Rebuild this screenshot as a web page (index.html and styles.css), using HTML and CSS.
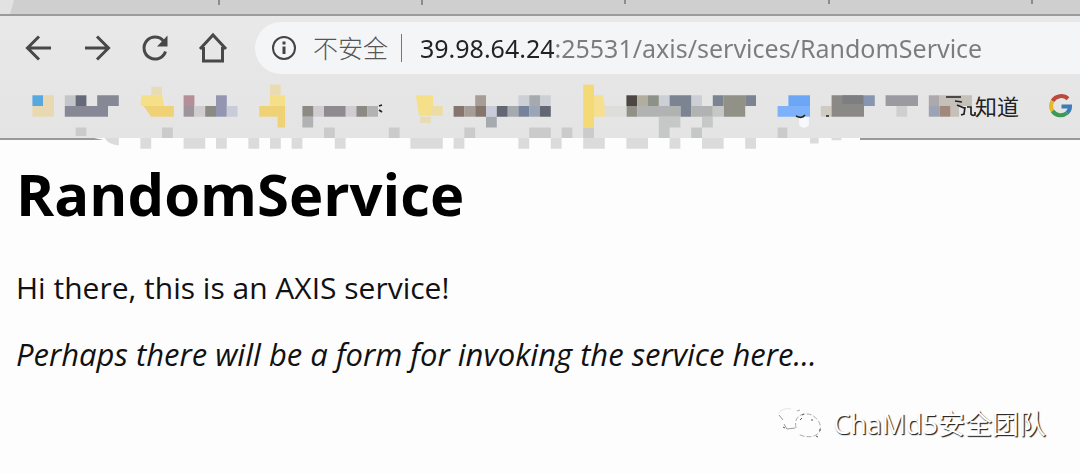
FILE: index.html
```html
<!DOCTYPE html>
<html lang="zh">
<head>
<meta charset="utf-8">
<title>RandomService</title>
<link rel="stylesheet" href="styles.css">
</head>
<body>
<header class="browser">
  <div class="tabs">
    <svg class="tab-marks" viewBox="0 0 1080 14" preserveAspectRatio="xMinYMin slice" aria-hidden="true">
      <path d="M0 0H14Q12 8 10 14H0Z" fill="#e2e2e2"/>
      <path d="M219 0V5M422 0V5M625 0V4M829 0V4M1032 0V4" stroke="#777" stroke-width="1.5"/>
    </svg>
  </div>
  <div class="toolbar">
    <div class="buttons">
      <button class="tool" aria-label="Back"><svg viewBox="0 0 32 32"><path d="M28 16H5M16 4.500L4.500 16L16 27.500"/></svg></button>
      <button class="tool" aria-label="Forward"><svg viewBox="0 0 32 32"><path d="M4 16H27M16 4.500L27.500 16L16 27.500"/></svg></button>
      <button class="tool" aria-label="Reload"><svg viewBox="0 0 32 32"><path d="M26.500 19.500A11 11 0 1 1 24.500 9"/><path class="solid" d="M28.500 3.500V14.500H18Z"/></svg></button>
      <button class="tool" aria-label="Home"><svg viewBox="0 0 32 32"><path d="M3 17L16 3L29 17M6.500 15V29H25.500V15"/></svg></button>
    </div>
    <form class="address">
      <svg class="info" viewBox="0 0 26 26" aria-hidden="true"><circle cx="13" cy="13" r="11"/><path d="M13 11.500V19M13 6.500V9.500" stroke-width="3"/></svg>
      <label class="secure" for="url">不安全</label>
      <input class="url" id="url" type="text" value="39.98.64.24:25531/axis/services/RandomService">
    </form>
  </div>
  <nav class="bookmarks">
    <svg class="mosaic" viewBox="0 74 972 64" aria-hidden="true">
      <path d="M94 138H860V141H108Z" fill="#fdfdfd"/>
      <g transform="translate(0 95.300) scale(10.800 10.700)">
        <path fill="#57a8df" d="M3 0h1v1h-1z"/>
        <path fill="#e9d9b3" d="M4 0h1v2h-2v-1h1z"/>
        <path fill="#c3c6c8" d="M6 0h1v1h-1z"/>
        <path fill="#666a78" d="M7 0h1v1h-1z"/>
        <path fill="#868995" d="M9 0h2v1h-1v1h-4v-1h3z"/>
        <g class="folders">
          <path fill="#eadcb0" d="M14-.8h1v.8h-1zM25-1h1v1h-1zM38.900 2h1v.6h-1z"/>
          <path fill="#f7df80" d="M13.100 0h1.900l.2 1h-2.200zM25 0h1.400v1h-1.400zM38.500 0h1.600v1.900h-1.300z"/>
          <path fill="#f1d06b" d="M13.300 1h2.800v1h-2.100zM24 1h2.400v2h-.7v-1h-1.700z"/>
          <path fill="#eddca0" d="M40 1h1v.9h-1z"/>
        </g>
        <path fill="#b58f97" d="M17 0h1v1h-1z"/>
        <path fill="#a0949c" d="M17 1h1v1h-1z"/>
        <path fill="#cfcdd0" d="M18 1h1v1h-1zM29 1h1v1h-1zM32 1h1v1h-1z"/>
        <path fill="#8c8b83" d="M19 1h1v1h-1zM28 1h1v1h-1zM33 1h1v1h-1z"/>
        <path fill="#9495b0" d="M20 0h1v2h-1z"/>
        <path fill="#c8cbd8" d="M21 1h1v1h-1zM45 1h1v1h-1z"/>
        <path fill="#8e8a91" d="M30 1h2v1h-2z"/>
        <path fill="#b0b2b3" d="M34 1h1v1h-1zM28 2h1v1h-1z"/>
        <path fill="#84756d" d="M42 1h1v1h-1zM44 1h1v1h-1z"/>
        <path fill="#a69d97" d="M43 1h1v1h-1zM44 0h1v1h-1z"/>
        <path fill="#a5aaaf" d="M45 2h1v1h-1zM47 1h1v1h-1zM49 0h1v1h-1z"/>
        <path fill="#626773" d="M46 1h1v1h-1zM50 1h1v1h-1z"/>
        <path fill="#74839b" d="M48 1h1v1h-1z"/>
        <path fill="#9aa5b5" d="M49 1h1v1h-1z"/>
        <path fill="#ccd0d6" d="M48 0h1v1h-1zM50 0h1v1h-1zM61 0h1v1h-1zM64 0h1v1h-1z"/>
        <path fill="#f4da77" d="M54-1h1v4h-1z"/>
        <path fill="#f6df91" d="M55 0h.8l.2 1v1h-1z"/>
        <path fill="#4c4743" d="M58 0h1v1h-1z"/>
        <path fill="#b2ae9f" d="M59 0h1v1h-1z"/>
        <path fill="#8d9289" d="M60 0h1v1h-1z"/>
        <path fill="#7c8492" d="M62 0h2v1h-2zM66 0h1v1h-1zM69 0h1v1h-1zM63 1h1v1h-1z"/>
        <path fill="#929187" d="M67 0h2v2h-2zM58 1h1v1h-1z"/>
        <path fill="#b0b3b1" d="M59 1h4v1h-4zM64 1h2v1h-2z"/>
        <path fill="#c6c7c7" d="M61 2h2v1h-2zM66 1h1v1h-1zM65 2h1v1h-1zM61 3h1v1h-1zM64 3h1v1h-1z"/>
        <path fill="#ddddda" d="M56 1h2v1h-2z"/>
        <path fill="#6ea6f6" d="M73 0h2v1h-2z"/>
        <path fill="#7db1fa" d="M72 1h3v1h-3z"/>
        <path fill="#f6f8fb" d="M74 2h.9v.8q-.5.500-.9 0z"/>
        <path fill="#d0cbc2" d="M76 1h1v1h-1z"/>
        <path fill="#8b8986" d="M77 0h3v2h-3z"/>
        <path fill="#7c7e82" d="M78 0h1.900v.8h-1.900z"/>
        <path fill="#8795b0" d="M80 0h1v1h-1z"/>
        <path fill="#9a9aa0" d="M82 0h3v1h-3z"/>
        <path fill="#cfcfcf" d="M83 1h1v1h-1z"/>
        <path fill="#aca8ac" d="M86 0h1v1h-1z"/>
        <path fill="#c6c0bb" d="M87 0h3v1h-3zM88 1h.800v1h-.800z"/>
        <path fill="#9ba3b5" d="M86 1h1v1h-1z"/>
        <path fill="#a2887a" d="M87 1h1v1h-1z"/>
        <path fill="#cbcbcb" d="M7 3h1v.8h-1zM15 3h1v1h-1zM30 3h1v1h-1zM36 3h1v1h-1zM43 3h1v1h-1zM49 3h2v1h-2zM52 3h1v1h-1zM54 3h1v1h-1zM72 3h.9v1h-.9z"/>
        <path fill="#dbdbdb" d="M9.700 4h1.300v.7q-1-.1-1.300-.7zM13 4h1v1h-1zM17 4h2v1h-2zM20 4h1v1h-1zM23 4h1v1h-1zM25 4h1v1h-1zM27 4h1v1h-1zM31 4h1v1h-1zM38 4h3v1h-3zM42 4h1v1h-1zM48 4h1v1h-1zM51 4h1v1h-1zM54 4h2v1h-2zM58 4h2v1h-2zM62 4h1v1h-1zM65 4h2v1h-2zM69 4h1v1h-1zM75 4h.800v.5h-.800zM77 4h.9v.200h-.9z"/>
      </g>
      <path d="M796 116Q802 119 805 115M379 106l3-1M379 110l3 2M826 116h3M946 97l15 0M955 101l7 1M957 105l7 3M965 107l-1 7l-3 1M967 107h4v7q1 2 4 1v-3" fill="none" stroke="#222" stroke-width="1.700"/>
    </svg>
    <a class="bookmark" href="#">知道</a>
    <a class="google" href="#" aria-label="Google"><svg viewBox="0 0 24 24">
      <path d="M3.500 7A10 10 0 0 1 19 4.800" stroke="#b94a3c"/>
      <path d="M3.500 7A10 10 0 0 0 3.500 17" stroke="#e5b62f"/>
      <path d="M3.500 17A10 10 0 0 0 18 19" stroke="#3d9a55"/>
      <path d="M18 19Q21 16.500 21 12.500H12.500" stroke="#3d7bb5"/>
    </svg></a>
  </nav>
</header>
<main class="page">
  <h1 class="title">RandomService</h1>
  <p class="line">Hi there, this is an AXIS service!</p>
  <p class="line note"><i>Perhaps there will be a form for invoking the service here...</i></p>
</main>
<footer class="watermark">
  <svg class="wechat" viewBox="0 0 48 36" aria-hidden="true">
    <path d="M4 9L8 14M9 18L12 23L20 22" stroke="#999"/>
    <path d="M3 8Q8 1 16 3" stroke="#e4e4e4"/>
    <path d="M22 5L25 4M21 22Q19 12 26 9Q37 5 44 16Q48 25 41 29Q33 33 23 28" stroke="#aaa" stroke-dasharray="5 2"/>
    <path d="M8 21l2 1M27 9l2-1M36 14l2 0M41 30l2 1M45 23v2M25 14l2-2" stroke="#555"/>
  </svg>
  <span class="team">ChaMd5安全团队</span>
</footer>
</body>
</html>
```
FILE: styles.css
```css
* { box-sizing: border-box; }
body {
  margin: 0;
  background: #fdfdfd;
  color: #111;
  font-family: "Open Sans", "Noto Sans CJK SC", sans-serif;
  overflow-x: hidden;
}
.browser {
  background: linear-gradient(#e9e9e9, #e4e4e4);
  border-bottom: 2px solid #999;
}
.tabs {
  height: 16px;
  background: #cfcfcf;
  border-bottom: 2px solid #9b9b9b;
}
.tab-marks { display: block; width: 100%; height: 14px; }
.toolbar {
  display: flex;
  align-items: center;
  height: 58px;
  padding-top: 6px;
}
.buttons {
  display: flex;
  gap: 26px;
  padding: 0 26px 0 23px;
}
.tool {
  width: 32px;
  height: 32px;
  padding: 0;
  border: 0;
  background: none;
}
.tool svg { display: block; fill: none; stroke: #484848; stroke-width: 3; }
.tool .solid { fill: #484848; stroke: none; }
.address {
  display: flex;
  flex: 1;
  align-items: center;
  height: 52px;
  padding-left: 16px;
  border-radius: 26px 0 0 26px;
  background: #f4f5f7;
}
.info { width: 26px; height: 26px; fill: none; stroke: #444; stroke-width: 2; }
.secure {
  padding: 0 13px 0 16px;
  border-right: 1px solid #777;
  color: #555;
  font-size: 25px;
  font-weight: 300;
  line-height: 28px;
}
.url {
  flex: 1;
  min-width: 0;
  margin-left: 18px;
  padding: 0;
  border: 0;
  background: linear-gradient(90deg, #222 134px, #7c7c7c 134px);
  -webkit-background-clip: text;
  background-clip: text;
  color: transparent;
  font: 25px/40px "Noto Sans", sans-serif;
}
.bookmarks { display: flex; align-items: center; height: 64px; }
.mosaic { flex: none; width: 972px; height: 64px; overflow: visible; }
.folders { opacity: 0.9; }
.bookmark {
  margin-left: 3px;
  color: #222;
  font-size: 22px;
  line-height: 28px;
  text-decoration: none;
  white-space: nowrap;
}
.google { margin-left: 30px; }
.google svg { display: block; width: 24px; height: 24px; fill: none; stroke-width: 4; }
.page { padding: 16px; }
.title { margin: 0; color: #000; font-size: 58px; line-height: 76px; font-weight: 700; }
.line { margin: 36px 0 0; font-size: 30px; line-height: 40px; }
.note { margin-top: 26px; font-size: 31px; }
.watermark {
  display: flex;
  justify-content: flex-end;
  align-items: center;
  gap: 10px;
  padding: 16px 34px 0 0;
}
.wechat { width: 48px; height: 36px; fill: none; stroke-width: 1; }
.team {
  color: #fff;
  font-size: 27px;
  line-height: 36px;
  text-shadow: 1px 1px 1px #222, 1px 1px 1px #777;
}
```
